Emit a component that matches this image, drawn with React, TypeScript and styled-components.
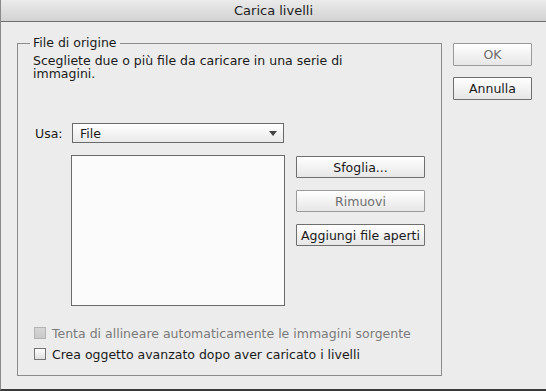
import { styled, createGlobalStyle } from 'styled-components';

const GlobalStyle = createGlobalStyle`
  html, body {
    margin: 0;
    padding: 0;
    background: #ececec;
  }
  body {
    font-family: 'DejaVu Sans', 'Liberation Sans', sans-serif;
    font-size: 12.5px;
    color: #1a1a1a;
  }
`;

const Window = styled.div`
  width: 546px;
  height: 391px;
  box-sizing: border-box;
  display: flex;
  flex-direction: column;
  background: #ececec;
  border-left: 1px solid #8a8a8a;
  border-bottom: 2px solid #3a3a3a;
  overflow: hidden;
`;

const TitleBar = styled.div`
  height: 21px;
  flex-shrink: 0;
  display: flex;
  align-items: center;
  justify-content: center;
  background: linear-gradient(#ebebeb, #d2d2d2);
  border-bottom: 1px solid #6e6e6e;
  font-size: 13px;
  color: #222;
`;

const Body = styled.div`
  display: flex;
  align-items: flex-start;
  padding: 21px 0 0 16px;
`;

const GroupBox = styled.div`
  position: relative;
  width: 425px;
  height: 333px;
  box-sizing: border-box;
  border: 1px solid #8c8c8c;
  padding: 10px 0 0 15px;
  display: flex;
  flex-direction: column;
`;

const Legend = styled.span`
  position: absolute;
  top: -9px;
  left: 12px;
  padding: 0 3px;
  line-height: 16px;
  background: #ececec;
`;

const Description = styled.p`
  margin: 0;
  line-height: 13px;
  width: 330px;
`;

const UsaRow = styled.div`
  display: flex;
  align-items: center;
  margin-top: 43px;
  padding-left: 2px;
`;

const Label = styled.span`
  width: 37px;
`;

const Select = styled.div`
  width: 212px;
  height: 20px;
  box-sizing: border-box;
  border: 1px solid #6a6a6a;
  background: linear-gradient(#ffffff, #e9e9e9);
  display: flex;
  align-items: center;
  justify-content: space-between;
  padding: 0 5px 0 7px;
`;

const Arrow = styled.span`
  width: 0;
  height: 0;
  border-left: 4px solid transparent;
  border-right: 4px solid transparent;
  border-top: 5px solid #444;
  margin-right: 1px;
`;

const ListRow = styled.div`
  display: flex;
  align-items: flex-start;
  margin-top: 12px;
  padding-left: 38px;
`;

const ListBox = styled.div`
  width: 214px;
  height: 151px;
  box-sizing: border-box;
  border: 1px solid #6a6a6a;
  background: #fbfbfb;
`;

const ButtonColumn = styled.div`
  display: flex;
  flex-direction: column;
  gap: 12px;
  margin-left: 11px;
  padding-top: 1px;
`;

const Button = styled.button<{ $disabled?: boolean; $width?: number }>`
  width: ${(p) => p.$width ?? 129}px;
  height: ${(p) => (p.$width ? 23 : 22)}px;
  box-sizing: border-box;
  margin: 0;
  padding: 0;
  border: 1px solid ${(p) => (p.$disabled ? '#9a9a9a' : '#6f6f6f')};
  border-radius: 1px;
  background: linear-gradient(#ffffff, #e6e6e6);
  font-family: 'DejaVu Sans', 'Liberation Sans', sans-serif;
  font-size: 12.5px;
  color: ${(p) => (p.$disabled ? '#6e6e6e' : '#1a1a1a')};
  display: flex;
  align-items: center;
  justify-content: center;
  white-space: nowrap;
`;

const CheckList = styled.div`
  display: flex;
  flex-direction: column;
  gap: 9px;
  margin-top: 21px;
  padding-left: 1px;
`;

const CheckRow = styled.label<{ $disabled?: boolean }>`
  display: flex;
  align-items: center;
  gap: 6px;
  height: 12px;
  color: ${(p) => (p.$disabled ? '#7a7a7a' : '#1a1a1a')};
`;

const Box = styled.span<{ $disabled?: boolean }>`
  width: 12px;
  height: 12px;
  box-sizing: border-box;
  border: 1px solid ${(p) => (p.$disabled ? '#b4b4b4' : '#767676')};
  background: ${(p) =>
    p.$disabled ? 'linear-gradient(#d6d6d6, #c8c8c8)' : 'linear-gradient(#ffffff, #dedede)'};
  flex-shrink: 0;
`;

const SideColumn = styled.div`
  display: flex;
  flex-direction: column;
  gap: 11px;
  margin-left: 11px;
`;

const App = () => {
  return (
    <>
      <GlobalStyle />
      <Window>
        <TitleBar>Carica livelli</TitleBar>
        <Body>
          <GroupBox>
            <Legend>File di origine</Legend>
            <Description>
              Scegliete due o più file da caricare in una serie di immagini.
            </Description>
            <UsaRow>
              <Label>Usa:</Label>
              <Select>
                <span>File</span>
                <Arrow />
              </Select>
            </UsaRow>
            <ListRow>
              <ListBox />
              <ButtonColumn>
                <Button>Sfoglia...</Button>
                <Button $disabled>Rimuovi</Button>
                <Button>Aggiungi file aperti</Button>
              </ButtonColumn>
            </ListRow>
            <CheckList>
              <CheckRow $disabled>
                <Box $disabled />
                Tenta di allineare automaticamente le immagini sorgente
              </CheckRow>
              <CheckRow>
                <Box />
                Crea oggetto avanzato dopo aver caricato i livelli
              </CheckRow>
            </CheckList>
          </GroupBox>
          <SideColumn>
            <Button $width={79} $disabled>
              OK
            </Button>
            <Button $width={79}>Annulla</Button>
          </SideColumn>
        </Body>
      </Window>
    </>
  );
};

export default App;
